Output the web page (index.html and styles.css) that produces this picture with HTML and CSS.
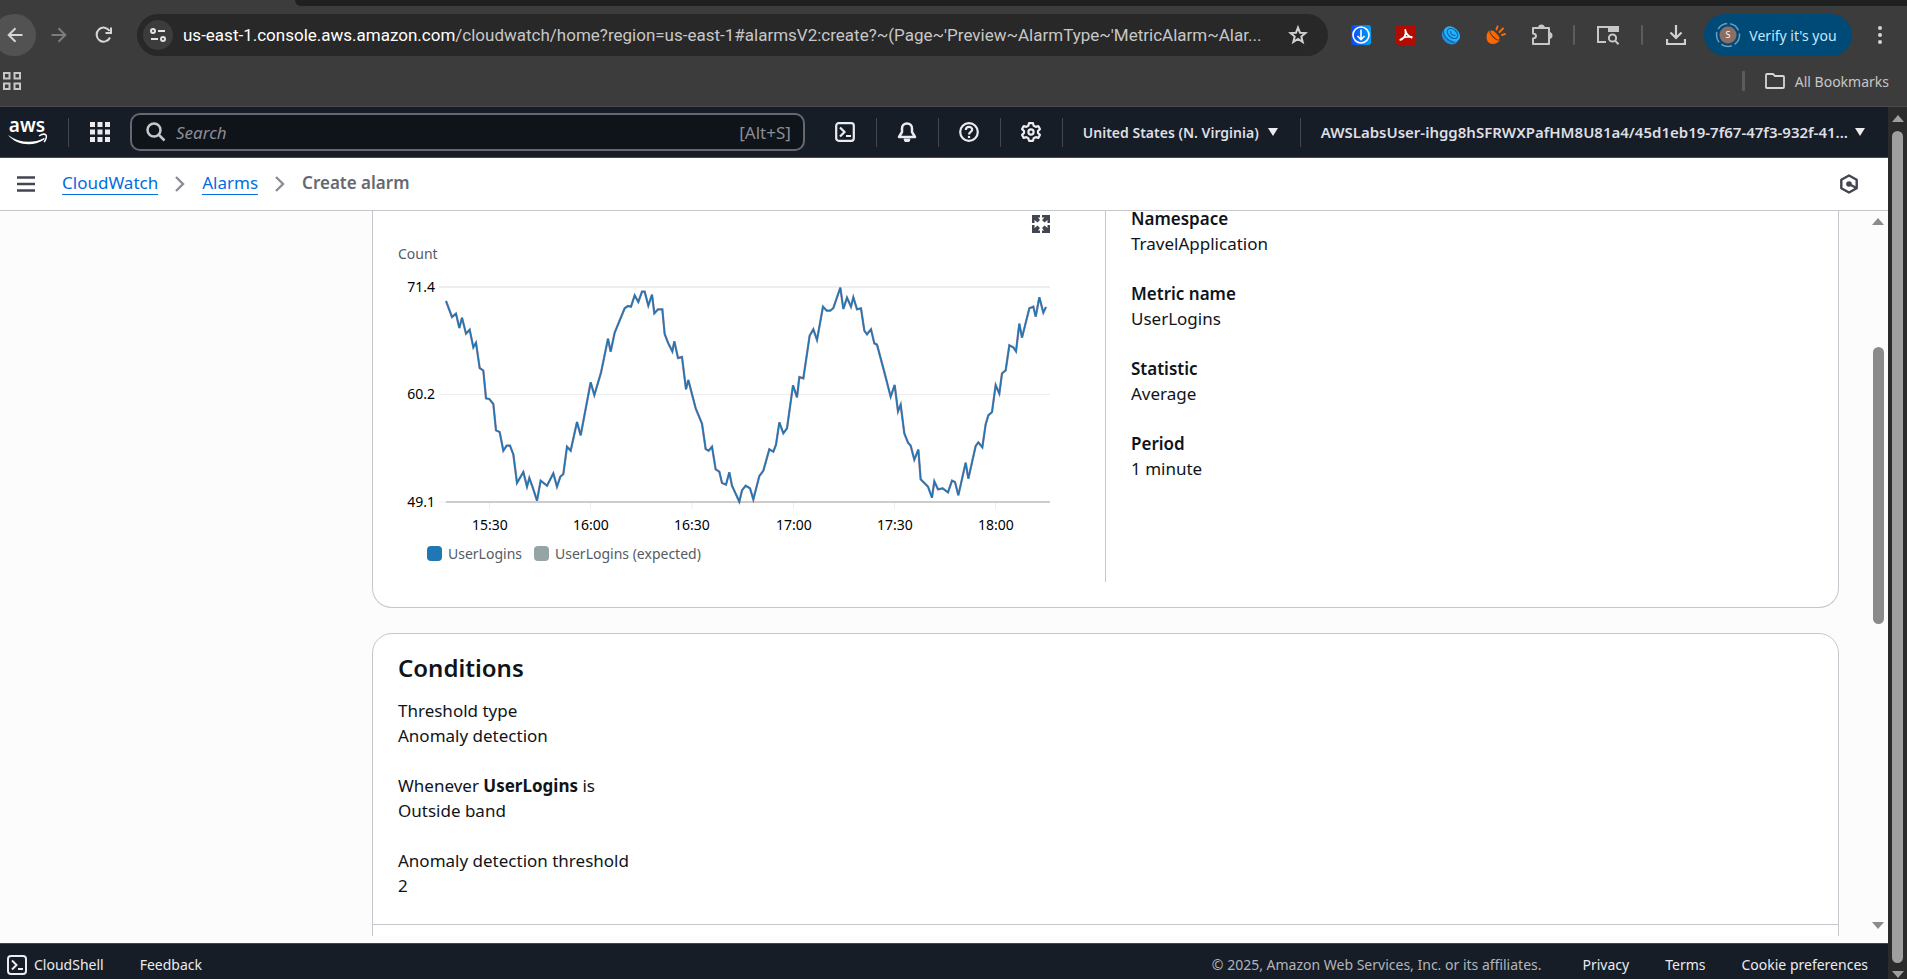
FILE: index.html
```html
<!DOCTYPE html>
<html lang="en">
<head>
<meta charset="utf-8">
<title>Create alarm | CloudWatch</title>
<meta name="viewport" content="width=device-width, initial-scale=1">
<link rel="stylesheet" href="styles.css">
</head>
<body>
<header class="browser">
  <div class="tab-strip"></div>
  <div class="toolbar">
    <button class="tool tool-back" aria-label="Back"><svg width="16" height="16" viewBox="0 0 16 16" fill="none" stroke="#d6d6d6" stroke-width="2"><path d="M15.500 8H2M8.500 1.200 1.700 8l6.800 6.800"/></svg></button>
    <button class="tool" aria-label="Forward"><svg width="16" height="16" viewBox="0 0 16 16" fill="none" stroke="#7c7c7c" stroke-width="2"><path d="M.5 8H14M7.500 1.200 14.300 8l-6.800 6.800"/></svg></button>
    <button class="tool" aria-label="Reload"><svg width="18" height="18" viewBox="0 0 18 18" fill="none" stroke="#d6d6d6" stroke-width="2"><path d="M15 11.500A7 7 0 1 1 14.600 5M16 1.500V7h-5.500"/></svg></button>
    <div class="address">
      <button class="site-info" aria-label="Site information"><svg width="16" height="14" viewBox="0 0 16 14" fill="none" stroke="#e3e3e3" stroke-width="2"><circle cx="3" cy="3" r="2"/><path d="M8 3h7M1 11h7"/><circle cx="13" cy="11" r="2"/></svg></button>
      <div class="url" role="textbox" aria-label="Address"><span class="host">us-east-1.console.aws.amazon.com</span>/cloudwatch/home?region=us-east-1#alarmsV2:create?~(Page~'Preview~AlarmType~'MetricAlarm~Alar...</div>
      <button class="star" aria-label="Bookmark this tab"><svg width="20" height="20" viewBox="0 0 20 20" fill="none" stroke="#d0d0d0" stroke-width="2"><path d="m10 2.500 2 5.200 5.600.3-4.300 3.600 1.400 5.500L10 14l-4.700 3.100 1.400-5.500L2.400 8 8 7.700z"/></svg></button>
    </div>
    <div class="extensions">
      <button aria-label="Downloader extension"><svg width="20" height="20" viewBox="0 0 20 20"><defs><linearGradient id="dl"><stop offset="0" stop-color="#0b44ff"/><stop offset="1" stop-color="#00a2f5"/></linearGradient></defs><rect width="20" height="20" rx="3" fill="url(#dl)"/><g fill="none" stroke="#fff" stroke-width="1.600"><circle cx="10" cy="10" r="8"/><path d="M10 4.500v10M6.500 11l3.500 3.500 3.500-3.500"/></g></svg></button>
      <button aria-label="PDF extension"><svg width="20" height="20" viewBox="0 0 20 20"><rect width="20" height="20" rx="3" fill="#b30b00"/><path d="M9.300 4.800c.8 3 .4 5-.8 6.700-1.200 1.900-2.900 3.300-4.300 3.300M4.200 14.800c1.500-1.800 5.500-3.300 11.500-3M9.300 5c.5 3 2.500 6 6.400 7.600" fill="none" stroke="#fff" stroke-width="1.700" stroke-linecap="round"/></svg></button>
      <button aria-label="Disc extension"><svg width="20" height="20" viewBox="0 0 20 20"><ellipse cx="9" cy="11.500" rx="9" ry="7" transform="rotate(42 9 11.500)" fill="#1e8fe8"/><ellipse cx="11" cy="9" rx="9" ry="6.500" transform="rotate(42 11 9)" fill="#20b2ff"/><g fill="none" stroke="#17609c" stroke-width="1.100"><path d="M2.500 5c-1 5 4 11 11 12.500"/><ellipse cx="11.500" cy="8.500" rx="6" ry="4" transform="rotate(42 11.500 8.500)"/><path d="M9.500 6c0 3 2 4.500 5 4.500"/></g></svg></button>
      <button aria-label="Launcher extension"><svg width="20" height="20" viewBox="0 0 20 20"><path d="M4 5C-.5 8 0 14 2 17c3 3 9 2.500 12-2z" fill="#ff6700"/><ellipse cx="9" cy="10" rx="6.500" ry="2.600" transform="rotate(45 9 10)" fill="#ff6700" stroke="#3c3c3c" stroke-width="1"/><path d="m10.500 4.500 1-3M13.500 7l3.500-3.500M16 10l3-1" stroke="#ff6700" stroke-width="2" stroke-linecap="round"/></svg></button>
      <button aria-label="Extensions"><svg width="22" height="22" viewBox="0 0 22 22" fill="none" stroke="#c7c7c7" stroke-width="2"><path d="M2 4h16v16H2v-5.500c4-.5 4-4.500 0-5z" stroke-linejoin="round"/><path d="M8 4a2.500 2.500 0 0 1 5 0M18 9a2.500 2.500 0 0 1 0 5" fill="#c7c7c7"/></svg></button>
    </div>
    <i class="bar"></i>
    <button class="tool lens" aria-label="Search this page"><svg width="22" height="20" viewBox="0 0 22 20" fill="none" stroke="#c7c7c7" stroke-width="2"><path d="M9 17H1V2h20v5M12 2v4h9" /><path d="M12 2h9v5h-9z" fill="#c7c7c7" stroke="none"/><circle cx="15.500" cy="13" r="3.600"/><path d="m18 15.600 3.500 3.600"/></svg></button>
    <i class="bar"></i>
    <button class="tool dl" aria-label="Downloads"><svg width="20" height="20" viewBox="0 0 20 20" fill="none" stroke="#d0d0d0" stroke-width="2.200"><path d="M10 0v13M4.500 7.500 10 13l5.500-5.500M1 14v5h18v-5"/></svg></button>
    <button class="profile"><svg width="26" height="26" viewBox="0 0 26 26"><circle cx="13" cy="13" r="11.500" fill="none" stroke="#6d9bbb" stroke-width="1.500" stroke-dasharray="11 3"/><circle cx="13" cy="13" r="8.500" fill="#8d6e63"/><text x="13" y="16" class="initial">S</text></svg>Verify it's you</button>
    <button class="menu" aria-label="Browser menu"><svg width="4" height="18" viewBox="0 0 4 18" fill="#d6d6d6"><circle cx="2" cy="2" r="2"/><circle cx="2" cy="9" r="2"/><circle cx="2" cy="16" r="2"/></svg></button>
  </div>
  <div class="bookmarks">
    <button aria-label="Apps"><svg width="18" height="18" viewBox="0 0 18 18" fill="none" stroke="#c7c7c7" stroke-width="2"><path d="M1 1h5.500v5.500H1zM11.500 1H17v5.500h-5.500zM1 11.500h5.500V17H1zM11.500 11.500H17V17h-5.500z"/></svg></button>
    <i class="bar push"></i>
    <button class="all"><svg width="20" height="16" viewBox="0 0 20 16" fill="none" stroke="#d6d6d6" stroke-width="1.800" stroke-linejoin="round"><path d="M1 2.500V14.500a1 1 0 0 0 1 .5h16a1 1 0 0 0 1-1V4a1 1 0 0 0-1-1h-8L8 1H2a1 1 0 0 0-1 1z"/></svg>All Bookmarks</button>
  </div>
</header>
<div class="viewport">
  <div class="page">
    <nav class="aws">
      <a class="logo" href="#" aria-label="AWS home"><svg width="40" height="44" viewBox="0 -8 40 44"><text x="19" y="14" class="aws-word">aws</text><path d="M0 17c11 8 25 9 36 3l1 1c-11 8-28 7-37-4z" fill="#fff"/><path d="M31 18c3-2 6-2 7-1s0 5-2 7" fill="none" stroke="#fff" stroke-width="1.500"/></svg></a>
      <i class="sep"></i>
      <button class="apps" aria-label="Services"><svg width="20" height="20" viewBox="0 0 20 20" fill="#ebebf0"><path d="M0 0h5v5H0zM7.500 0h5v5h-5zM15 0h5v5h-5zM0 7.500h5v5H0zM7.500 7.500h5v5h-5zM15 7.500h5v5h-5zM0 15h5v5H0zM7.500 15h5v5h-5zM15 15h5v5h-5z"/></svg></button>
      <label class="search"><svg width="20" height="20" viewBox="0 0 20 20" fill="none" stroke="#c6c6cd" stroke-width="2.500"><circle cx="8" cy="8" r="6.500"/><path d="m12.500 12.500 6 6"/></svg><input type="search" placeholder="Search" aria-label="Search"><span>[Alt+S]</span></label>
      <button class="nav-icon first" aria-label="CloudShell"><svg width="20" height="20" viewBox="0 0 20 20" fill="none" stroke="#ebebf0" stroke-width="2.200"><rect x="1.200" y="1.200" width="17.600" height="17.600" rx="2.500"/><path d="m5 5.500 4.500 4.500L5 14.500M11 14h5"/></svg></button>
      <i class="sep"></i>
      <button class="nav-icon" aria-label="Notifications"><svg width="20" height="20" viewBox="0 0 20 20" fill="none" stroke="#ebebf0" stroke-width="2.500" stroke-linejoin="round"><path d="M10 1.500c-3 0-5 2-5 5V10l-3 5h16l-3-5V6.500c0-3-2-5-5-5z"/><path d="M7 17a3 3 0 0 0 6 0z" fill="#ebebf0" stroke-width="1"/></svg></button>
      <i class="sep"></i>
      <button class="nav-icon" aria-label="Help"><svg width="20" height="20" viewBox="0 0 20 20" fill="none" stroke="#ebebf0" stroke-width="2.200"><circle cx="10" cy="10" r="8.800"/><path d="M6.800 8c0-4 6.400-4 6.400-.5 0 2.500-3.200 2.300-3.200 5M10 14v2"/></svg></button>
      <i class="sep"></i>
      <button class="nav-icon" aria-label="Settings"><svg width="20" height="20" viewBox="0 0 20 20" fill="none" stroke="#ebebf0" stroke-width="2.200" stroke-linejoin="round"><path d="M8 1.200h4l.7 2.600 2 1.100 2.600-.8 1.600 3-1.900 1.900v2l1.900 1.900-1.600 3-2.600-.8-2 1.100-.7 2.600H8l-.7-2.600-2-1.100-2.600.8-1.600-3L3 11V9L1.100 7.100l1.600-3 2.600.8 2-1.100z"/><circle cx="10" cy="10" r="2.600"/></svg></button>
      <i class="sep"></i>
      <button class="nav-text">United States (N. Virginia)<i class="caret"></i></button>
      <i class="sep"></i>
      <button class="nav-text user"><span>AWSLabsUser-ihgg8hSFRWXPafHM8U81a4/45d1eb19-7f67-47f3-932f-41...</span><i class="caret"></i></button>
    </nav>
    <div class="crumbs">
      <button aria-label="Open navigation"><svg width="18" height="16" viewBox="0 0 18 16" stroke="#424650" stroke-width="2.400"><path d="M0 1.500h18M0 8h18M0 14.500h18"/></svg></button>
      <a href="#">CloudWatch</a>
      <svg class="chev" width="10" height="16" viewBox="0 0 10 16" fill="none" stroke="#8c8c94" stroke-width="2.400"><path d="m1 1 7 7-7 7"/></svg>
      <a href="#">Alarms</a>
      <svg class="chev" width="10" height="16" viewBox="0 0 10 16" fill="none" stroke="#8c8c94" stroke-width="2.400"><path d="m1 1 7 7-7 7"/></svg>
      <b>Create alarm</b>
      <button class="hex" aria-label="Amazon Q"><svg width="18" height="20" viewBox="0 0 18 20" fill="none" stroke="#424650" stroke-width="2.400" stroke-linejoin="round"><path d="m9 1.500 7.700 4.300v8.400L9 18.500l-7.700-4.300V5.800z"/><circle cx="9" cy="10" r="2.800" fill="#424650" stroke="none"/><path d="m9 10 7.500 4"/></svg></button>
    </div>
    <div class="stage">
      <main class="scroller">
        <section class="card metric">
          <div class="graph">
            <button class="expand" aria-label="Enlarge graph"><svg width="18" height="18" viewBox="0 0 18 18" fill="#424650"><path d="M0 0h8v2.500H6L8 5 5.500 7.500 2.500 5v3H0zM18 0v8h-2.500V5l-3 2.500L10 5l2.500-2.500H10V0zM0 18v-8h2.500v3l3-2.500L8 13l-2 2.500h2V18zM18 18h-8v-2.500h2L10 13l2.500-2.500 3 2.500v-3H18z"/></svg></button>
            <svg class="chart" viewBox="0 0 652 302" role="img" aria-label="UserLogins over time">
              <text x="0" y="17" class="unit">Count</text>
              <path d="M41 45h611" stroke="#eee" stroke-width="2"/>
              <path d="M41 152.500h611" stroke="#eee"/>
              <path d="M41 260h7M91.500 261v6M192.500 261v6M294 261v6M395.500 261v6M496.500 261v6M597.500 261v6" stroke="#eee"/>
              <path d="M48 260h604" stroke="#ccc" stroke-width="2"/>
              <g class="tick-y"><text x="37" y="50">71.4</text><text x="37" y="157">60.2</text><text x="37" y="265">49.1</text></g>
              <g class="tick-x"><text x="92" y="288">15:30</text><text x="193" y="288">16:00</text><text x="294" y="288">16:30</text><text x="396" y="288">17:00</text><text x="497" y="288">17:30</text><text x="598" y="288">18:00</text></g>
              <svg width="652" height="302" viewBox="114 126 1956 906" fill="none"><defs><polyline id="series" points="258,303 276,351 288,341 298,384 306,353 318,401 329,389 340,442 348,428 359,504 370,512 378,595 388,597 400,612 408,691 419,696 430,752 440,737 450,737 460,763 471,849 490,816 501,860 508,834 520,868 531,902 542,842 561,857 580,820 591,860 601,830 610,822 621,740 632,752 651,666 662,706 692,547 703,585 723,518 744,416 752,455 764,398 794,325 804,318 813,320 824,286 835,306 846,275 854,275 865,317 876,284 883,340 894,328 907,328 914,402 924,428 937,454 943,424 954,474 966,471 978,568 985,540 1007,625 1026,671 1037,747 1046,752 1056,740 1067,808 1078,815 1086,849 1098,854 1108,817 1116,857 1138,905 1146,871 1157,857 1170,865 1180,898 1198,828 1210,812 1228,748 1240,755 1248,734 1258,667 1270,700 1281,685 1299,556 1311,592 1318,531 1330,535 1349,407 1360,388 1371,420 1389,320 1400,332 1411,332 1420,324 1441,263 1450,327 1461,293 1473,320 1480,292 1491,328 1503,325 1513,392 1521,403 1533,388 1543,430 1551,434 1574,520 1592,590 1604,555 1614,634 1622,614 1633,700 1644,728 1652,737 1663,779 1675,749 1682,838 1704,860 1716,893 1723,844 1734,868 1748,865 1764,877 1776,842 1785,846 1795,886 1817,788 1825,836 1847,738 1855,727 1867,742 1877,673 1885,646 1896,636 1907,555 1918,581 1926,520 1937,511 1948,436 1960,442 1968,454 1978,371 1986,413 2008,325 2020,320 2027,350 2038,292 2050,338 2058,321"/></defs><use href="#series" class="band"/><use href="#series" class="line"/></svg>
            </svg>
            <div class="legend"><span><i class="blue"></i>UserLogins</span><span><i class="grey"></i>UserLogins (expected)</span></div>
          </div>
          <dl class="facts strong">
            <div><dt>Namespace</dt><dd>TravelApplication</dd></div>
            <div><dt>Metric name</dt><dd>UserLogins</dd></div>
            <div><dt>Statistic</dt><dd>Average</dd></div>
            <div><dt>Period</dt><dd>1 minute</dd></div>
          </dl>
        </section>
        <section class="card conditions">
          <h2>Conditions</h2>
          <dl class="facts">
            <div><dt>Threshold type</dt><dd>Anomaly detection</dd></div>
            <div><dt>Whenever <b>UserLogins</b> is</dt><dd>Outside band</dd></div>
            <div><dt>Anomaly detection threshold</dt><dd>2</dd></div>
          </dl>
          <div class="extra"></div>
        </section>
      </main>
      <div class="scrollbar inner"><i class="up"></i><i class="thumb"></i><i class="down"></i></div>
    </div>
    <footer class="foot">
      <button class="shell"><svg width="20" height="20" viewBox="0 0 20 20" fill="none" stroke="#ebebf0" stroke-width="2"><rect x="1" y="1" width="18" height="18" rx="3"/><path d="m5 5.500 4.500 4.500L5 14.500M11 14h5"/></svg>CloudShell</button>
      <a href="#">Feedback</a>
      <span class="copy">© 2025, Amazon Web Services, Inc. or its affiliates.</span>
      <a href="#">Privacy</a><a href="#">Terms</a><a href="#">Cookie preferences</a>
    </footer>
  </div>
  <div class="scrollbar outer"><i class="up"></i><i class="thumb"></i><i class="down"></i></div>
</div>
</body>
</html>
```

FILE: styles.css
```css
* { box-sizing: border-box; }
body {
  margin: 0;
  height: 100vh;
  display: flex;
  flex-direction: column;
  overflow: hidden;
  background: #fcfcfd;
  color: #0f141a;
  font: 17px/25px "Noto Sans", "Open Sans", sans-serif;
}
button, input { font: inherit; color: inherit; background: none; border: 0; padding: 0; margin: 0; }
button { display: inline-flex; align-items: center; justify-content: center; flex: none; white-space: nowrap; }
svg { display: block; flex: none; }
i { display: block; flex: none; }

/* browser chrome */
.browser { background: #3c3c3c; border-bottom: 1px solid #4a4a4a; flex: none; }
.tab-strip { height: 6px; margin-left: 295px; background: #1f2120; border-bottom-left-radius: 12px; }
.toolbar { display: flex; align-items: center; height: 58px; color: #c7c7c7; }
.tool { width: 45px; height: 42px; }
.tool-back { width: 43px; margin-left: -7px; border-radius: 21px; background: #525252; }
.address {
  flex: 1; min-width: 0; height: 42px; margin-left: 11px; padding: 0 20px 0 6px;
  display: flex; align-items: center;
  border-radius: 21px; background: #282828;
}
.site-info { width: 30px; height: 30px; border-radius: 15px; background: #3c3c3c; }
.url { flex: 1; min-width: 0; margin-left: 10px; overflow: hidden; white-space: nowrap; font-family: Roboto, sans-serif; font-size: 17px; color: #c7c7c7; }
.host { color: #fff; }
.extensions { display: flex; gap: 25px; margin: 0 20px 0 23px; }
.bar { width: 2px; height: 20px; background: #5c5c5c; border-radius: 1px; }
.lens { width: 66px; }
.dl { width: 65px; }
.profile { gap: 8px; width: 148px; height: 42px; padding-right: 4px; border-radius: 21px; background: #004a77; color: #c2e7ff; font-size: 14px; margin-left: -4px; }
.initial { font: 9px "Noto Sans", sans-serif; fill: #fff; text-anchor: middle; }
.menu { width: 55px; height: 42px; }
.bookmarks { display: flex; align-items: center; height: 42px; padding: 0 18px 8px 3px; }
.push { margin-left: auto; width: 3px; }
.all { gap: 10px; margin-left: 20px; font-size: 14px; color: #c7c7c7; }

/* console */
.viewport { flex: 1; min-height: 0; display: flex; }
.page { flex: 1; min-width: 0; display: flex; flex-direction: column; }
.aws {
  display: flex; align-items: center; height: 51px; flex: none;
  background: #161d26; border-bottom: 1px solid #424650; color: #dedee3;
}
.logo { margin: 0 20px 0 8px; }
.aws-word { font: 600 19px "Noto Sans", sans-serif; fill: #fff; text-anchor: middle; }
.sep { width: 1px; height: 29px; background: #424650; }
.apps { width: 61px; height: 40px; }
.search {
  flex: 1; display: flex; align-items: center; gap: 10px; height: 38px; padding: 0 12px 0 14px;
  border: 2px solid #656871; border-radius: 10px; background: #0f141a; color: #8c8c94;
}
.search input { flex: 1; min-width: 0; outline: 0; }
.search input::placeholder { color: #8c8c94; font-style: italic; opacity: 1; }
.nav-icon { width: 61px; height: 40px; }
.first { margin-left: 10px; }
.nav-text { gap: 9px; padding: 0 22px 0 20px; font-size: 14px; font-weight: 600; }
.user { gap: 7px; padding-right: 23px; font-size: 15px; }
.caret { border: 5px solid transparent; border-top: 8px solid #ebebf0; border-bottom: 0; }

.crumbs {
  display: flex; align-items: center; height: 53px; flex: none; padding: 0 30px 1px 17px;
  background: #fff; border-bottom: 1px solid #c6c6cd;
}
.crumbs a { color: #006ce0; text-decoration: none; border-bottom: 1px solid #006ce0; line-height: 22px; }
.crumbs button + a { margin-left: 27px; }
.crumbs b { font-weight: 600; color: #656871; line-height: 22px; border-bottom: 1px solid transparent; }
.chev { margin: 0 17px; }
.hex { margin-left: auto; }

.stage { flex: 1; min-height: 0; display: flex; padding-bottom: 7px; }
.scroller { flex: 1; min-width: 0; overflow: hidden; padding: 0 29px 0 372px; }
.card { background: #fff; border: 1px solid #c6c6cd; border-radius: 20px; }
.metric { display: grid; grid-template-columns: 1fr 1fr; border-top: 0; border-radius: 0 0 20px 20px; padding: 0 24px 25px 25px; margin-bottom: 25px; }
.graph { min-width: 0; border-right: 1px solid #c6c6cd; padding: 4px 55px 16px 0; }
.expand { display: flex; margin-left: auto; }
.chart { width: 100%; margin-top: 9px; }
.chart text { font-family: "Noto Sans", "Open Sans", sans-serif; font-size: 14px; }
.line { stroke: #1f77b4; stroke-width: 5px; }
.band { stroke: #8a4a6c; stroke-opacity: 0.6; stroke-width: 7px; }
.unit { fill: #545b64; }
.tick-y { text-anchor: end; }
.tick-x { text-anchor: middle; }
.legend { display: flex; gap: 12px; margin-top: -3px; padding-left: 29px; font-size: 14px; color: #545b64; }
.legend span { display: flex; align-items: center; gap: 6px; }
.legend i { width: 15px; height: 15px; border-radius: 4px; }
.blue { background: #1f77b4; }
.grey { background: #95a5a6; }

.facts { margin: 0; display: flex; flex-direction: column; gap: 25px; }
.facts dd { margin: 0; }
.strong { padding-left: 25px; margin-top: -5px; }
.strong dt { font-weight: 600; }
h2 { margin: 0; font-size: 24px; line-height: 30px; font-weight: 600; }
.conditions { padding: 19px 0 0; height: 460px; }
.conditions h2, .conditions .facts { padding: 0 25px; }
.conditions .facts { margin: 15px 0 26px; }
.extra { border-top: 1px solid #c6c6cd; }

.foot {
  display: flex; align-items: center; height: 36px; flex: none; gap: 36px; padding: 6px 20px 0 7px;
  background: #161d26; border-top: 1px solid #424650; color: #ebebf0; font-size: 14px; line-height: 20px;
}
.foot a { color: inherit; text-decoration: none; white-space: nowrap; }
.shell { gap: 7px; }
.copy { margin-left: auto; margin-right: 5px; color: #b4b4bb; }

/* scroll bars */
.scrollbar { display: flex; flex-direction: column; align-items: center; flex: none; width: 20px; color: #8b8b8b; }
.outer { width: 19px; background: #2b2b2b; color: #9f9f9f; padding: 8px 0 1px; }
.inner { padding: 7px 0; }
.up, .down { border: 6px solid transparent; }
.up { border-top: 0; border-bottom: 7px solid currentColor; }
.down { border-bottom: 0; border-top: 7px solid currentColor; }
.thumb { width: 11px; border-radius: 6px; background: currentColor; }
.outer .thumb { flex: 1; margin: 9px 0 8px; }
.inner .thumb { height: 39%; margin: 122px 0 auto; }
```
